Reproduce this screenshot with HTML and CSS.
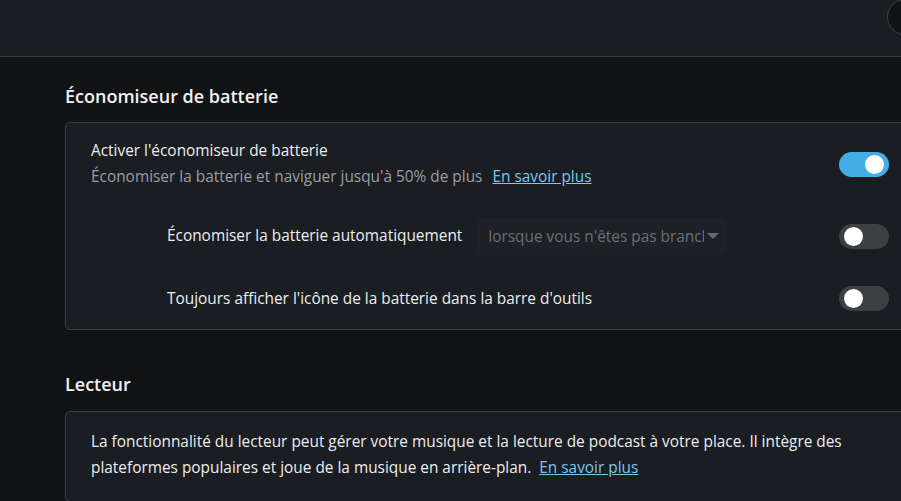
FILE: index.html
```html
<!DOCTYPE html>
<html lang="fr">
<head>
<meta charset="utf-8">
<title>Paramètres</title>
<link rel="stylesheet" href="styles.css">
</head>
<body>
<header class="topbar">
  <div class="avatar"></div>
</header>
<main class="content">
  <section class="section">
    <h2 class="section-title">Économiseur de batterie</h2>
    <div class="card">
      <div class="row row-main">
        <div class="row-text">
          <div class="row-title">Activer l'économiseur de batterie</div>
          <div class="row-sub">Économiser la batterie et naviguer jusqu'à 50% de plus <a class="link" href="#">En savoir plus</a></div>
        </div>
        <span class="toggle on"><span class="knob"></span></span>
      </div>
      <div class="row row-child">
        <div class="row-text inline">
          <span class="row-title">Économiser la batterie automatiquement</span>
          <div class="select">
            <span class="select-value">lorsque vous n'êtes pas branché</span>
            <span class="caret"></span>
          </div>
        </div>
        <span class="toggle"><span class="knob"></span></span>
      </div>
      <div class="row row-child">
        <div class="row-text">
          <span class="row-title">Toujours afficher l'icône de la batterie dans la barre d'outils</span>
        </div>
        <span class="toggle"><span class="knob"></span></span>
      </div>
    </div>
  </section>
  <section class="section second">
    <h2 class="section-title">Lecteur</h2>
    <div class="card card-text">
      <p class="desc">La fonctionnalité du lecteur peut gérer votre musique et la lecture de podcast à votre place. Il intègre des<br>plateformes populaires et joue de la musique en arrière-plan. &nbsp;<a class="link" href="#">En savoir plus</a></p>
    </div>
  </section>
</main>
</body>
</html>
```
FILE: styles.css
```css
html, body {
  margin: 0;
  padding: 0;
  overflow: hidden;
  height: 100%;
}
body {
  background: #121315;
  font-family: "Open Sans", "Noto Sans", sans-serif;
  color: #e8eaed;
}
.topbar {
  position: relative;
  height: 56px;
  background: #1a1d21;
  border-bottom: 1px solid #3b4047;
}
.avatar {
  position: absolute;
  left: 887px;
  top: -1px;
  width: 36px;
  height: 36px;
  box-sizing: border-box;
  border-radius: 50%;
  background: #121315;
  border: 1px solid #3c434b;
}
.content {
  padding-left: 65px;
}
.section-title {
  margin: 27px 0 14px;
  font-size: 18px;
  line-height: 24px;
  font-weight: 600;
  color: #f1f2f3;
}
.second .section-title {
  margin-top: 42px;
  margin-bottom: 15px;
}
.card {
  width: 850px;
  box-sizing: border-box;
  background: #1a1d21;
  border: 1px solid #3b4047;
  border-radius: 5px;
}
.row {
  display: flex;
  align-items: center;
  justify-content: space-between;
  padding-right: 25px;
}
.row-main {
  height: 82px;
  padding-left: 25px;
}
.row-child {
  height: 62px;
  padding-left: 101px;
}
.row-text.inline {
  display: flex;
  align-items: center;
  gap: 15px;
}
.row-title {
  font-size: 15.4px;
  line-height: 22px;
  color: #eceef0;
}
.row-sub {
  margin-top: 4px;
  font-size: 15.4px;
  line-height: 22px;
  color: #9a9fa5;
}
.link {
  color: #7cc6f0;
  text-decoration: underline;
  margin-left: 6px;
}
.select {
  display: flex;
  align-items: center;
  width: 250px;
  height: 37px;
  box-sizing: border-box;
  padding: 0 8px 0 11px;
  background: #1d2024;
  border-radius: 4px;
}
.select-value {
  flex: 1;
  overflow: hidden;
  white-space: nowrap;
  text-overflow: clip;
  font-size: 15.4px;
  color: #6b7075;
}
.caret {
  width: 0;
  height: 0;
  margin-left: 3px;
  border-left: 6px solid transparent;
  border-right: 6px solid transparent;
  border-top: 6px solid #65696e;
}
.toggle {
  position: relative;
  display: inline-block;
  width: 50px;
  height: 25px;
  border-radius: 13px;
  background: #3d4043;
  flex: none;
}
.toggle.on {
  background: #42aee3;
}
.knob {
  position: absolute;
  top: 3px;
  left: 5px;
  width: 19px;
  height: 19px;
  border-radius: 50%;
  background: #ffffff;
}
.toggle.on .knob {
  left: auto;
  right: 5px;
}
.card-text {
  padding: 17px 25px 20px;
}
.desc {
  margin: 0;
  font-size: 15.4px;
  line-height: 26px;
  color: #eceef0;
}
.desc .link {
  margin-left: 0;
}
```
